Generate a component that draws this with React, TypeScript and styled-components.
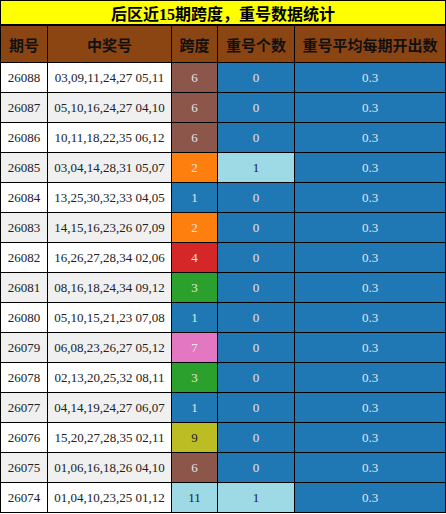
import React from "react";
import styled, { createGlobalStyle } from "styled-components";

const Global = createGlobalStyle`
  html, body { margin: 0; padding: 0; background: #fff; }
  body { font-family: "Liberation Serif", "Noto Sans CJK SC", serif; }
`;

const Page = styled.div`
  width: 446px;
  display: flex;
  flex-direction: column;
`;

const Title = styled.div`
  height: 23px;
  border: 1px solid #000;
  background: #ffff00;
  display: flex;
  align-items: center;
  justify-content: center;
  font-family: "Liberation Serif", "Noto Sans CJK SC", serif;
  font-weight: bold;
  font-size: 16px;
  color: #000;
`;

const Grid = styled.div`
  display: grid;
  grid-template-columns: 46px 123px 45px 76px 150px;
  grid-template-rows: 36px;
  grid-auto-rows: 29px;
  gap: 1px;
  padding: 1px;
  background: #000;
`;

const HeadCell = styled.div`
  background: #8b4513;
  color: #111;
  font-family: "Noto Sans CJK SC", sans-serif;
  font-weight: bold;
  font-size: 15px;
  display: flex;
  align-items: center;
  justify-content: center;
`;

const Cell = styled.div<{ $bg: string; $fg: string }>`
  background: ${(p) => p.$bg};
  color: ${(p) => p.$fg};
  font-family: "Liberation Serif", "Noto Sans CJK SC", serif;
  font-size: 13px;
  display: flex;
  align-items: center;
  justify-content: center;
  white-space: nowrap;
`;

type Row = [string, string, number, number];

const rows: Row[] = [
  ["26088", "03,09,11,24,27 05,11", 6, 0],
  ["26087", "05,10,16,24,27 04,10", 6, 0],
  ["26086", "10,11,18,22,35 06,12", 6, 0],
  ["26085", "03,04,14,28,31 05,07", 2, 1],
  ["26084", "13,25,30,32,33 04,05", 1, 0],
  ["26083", "14,15,16,23,26 07,09", 2, 0],
  ["26082", "16,26,27,28,34 02,06", 4, 0],
  ["26081", "08,16,18,24,34 09,12", 3, 0],
  ["26080", "05,10,15,21,23 07,08", 1, 0],
  ["26079", "06,08,23,26,27 05,12", 7, 0],
  ["26078", "02,13,20,25,32 08,11", 3, 0],
  ["26077", "04,14,19,24,27 06,07", 1, 0],
  ["26076", "15,20,27,28,35 02,11", 9, 0],
  ["26075", "01,06,16,18,26 04,10", 6, 0],
  ["26074", "01,04,10,23,25 01,12", 11, 1],
];

const LIGHT = "#e6e6e6";
const DARK = "#222";

const spanColors: Record<number, [string, string]> = {
  1: ["#1f77b4", LIGHT],
  2: ["#ff7f0e", LIGHT],
  3: ["#2ca02c", LIGHT],
  4: ["#d62728", LIGHT],
  6: ["#8c564b", LIGHT],
  7: ["#e377c2", LIGHT],
  9: ["#bcbd22", DARK],
  11: ["#9edae5", DARK],
};

const repColors: Record<number, [string, string]> = {
  0: ["#1f77b4", LIGHT],
  1: ["#9edae5", DARK],
};

const headers = ["期号", "中奖号", "跨度", "重号个数", "重号平均每期开出数"];

export default function App() {
  return (
    <Page>
      <Global />
      <Title>后区近15期跨度，重号数据统计</Title>
      <Grid>
        {headers.map((h) => (
          <HeadCell key={h}>{h}</HeadCell>
        ))}
        {rows.map(([issue, nums, span, rep], i) => {
          const rowBg = i % 2 === 0 ? "#ffffff" : "#f0f0f0";
          const [sBg, sFg] = spanColors[span];
          const [rBg, rFg] = repColors[rep];
          return (
            <React.Fragment key={issue}>
              <Cell $bg={rowBg} $fg={DARK}>{issue}</Cell>
              <Cell $bg={rowBg} $fg={DARK}>{nums}</Cell>
              <Cell $bg={sBg} $fg={sFg}>{span}</Cell>
              <Cell $bg={rBg} $fg={rFg}>{rep}</Cell>
              <Cell $bg="#1f77b4" $fg={LIGHT}>0.3</Cell>
            </React.Fragment>
          );
        })}
      </Grid>
    </Page>
  );
}
